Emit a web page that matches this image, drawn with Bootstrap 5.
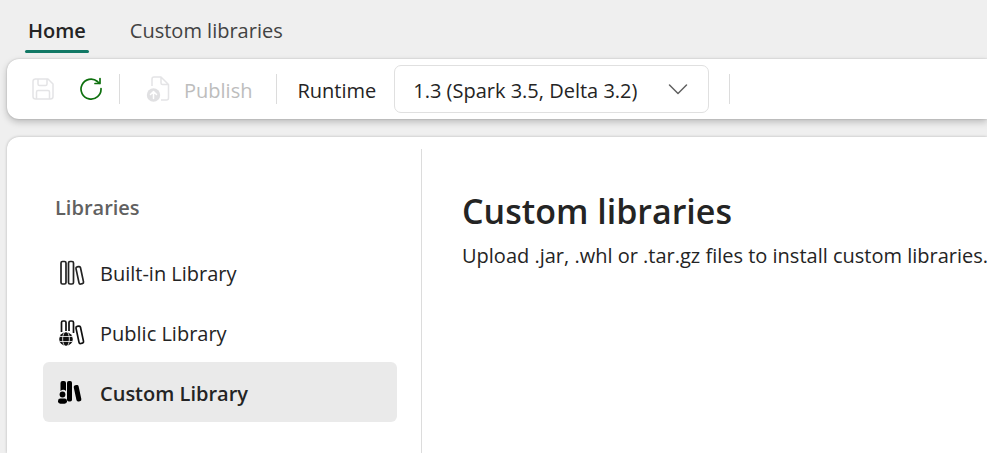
<!DOCTYPE html>
<html lang="en">
<head>
<meta charset="utf-8">
<meta name="viewport" content="width=device-width, initial-scale=1">
<title>Custom libraries</title>
<link href="https://cdn.jsdelivr.net/npm/bootstrap@5.3.0/dist/css/bootstrap.min.css" rel="stylesheet">
<style>
  body { font-family: "Segoe UI", "Open Sans", "Noto Sans", sans-serif; font-size: 20px; line-height: 28px; color: #242424; background: #efefef; }
  .top-tabs { padding: 17px 0 6px 25px; gap: 38px; }
  .top-tabs .nav-link { padding: 0 3px 5px; line-height: 28px; color: #424242; border-bottom: 3px solid transparent; }
  .top-tabs .nav-link.active { color: #242424; font-weight: 600; position: relative; }
  .top-tabs .nav-link.active::after { content: ""; position: absolute; left: 0; right: 0; bottom: -3px; height: 3px; border-radius: 2px; background: #117865; }
  .surface { background: #fff; margin-left: 7px; box-shadow: 0 0 2px rgba(0,0,0,.2), 0 3px 7px rgba(0,0,0,.22); }
  .toolbar { height: 60px; border-radius: 12px 0 0 12px; padding-left: 24px; }
  .workspace { border-radius: 12px 0 0 0; margin-top: 18px; box-shadow: 0 0 3px rgba(0,0,0,.25); padding-top: 12px; }
  .tool { background: none; border: 0; padding: 0; line-height: 28px; }
  .tool:disabled { color: #bdbdbd; }
  .rule { width: 1px; height: 30px; background: #dcdcdc; }
  .tool svg, .lib-link svg { display: block; flex: none; }
  .tool-text { padding-top: 3px; }
  .publish { padding-left: 10px; gap: 14px; }
  .runtime { width: 315px; height: 48px; margin: 0 20px 0 18px; padding: 3px 48px 0 18px; border-color: #e0e0e0; border-radius: 7px; font-size: 20px; color: #242424; background-size: 20px 20px; background-position: right 20px center;
    background-image: url("data:image/svg+xml,%3Csvg xmlns='http://www.w3.org/2000/svg' viewBox='0 0 20 20'%3E%3Cpath d='M1.5 6 10 14.5 18.500 6' fill='none' stroke='%23616161' stroke-width='1.500' stroke-linecap='round' stroke-linejoin='round'/%3E%3C/svg%3E"); }
  .side { width: 415px; padding: 0 24px 0 36px; border-right: 1px solid #dcdcdc; }
  .side h2 { margin: 45px 0 20px 12px; font-size: 20px; line-height: 28px; font-weight: 600; color: #616161; }
  .lib-link { height: 60px; padding: 3px 14px 0; gap: 14px; border-radius: 6px; color: #242424; }
  .lib-link.active { background: #eaeaea; font-weight: 600; }
  .detail { padding: 39px 0 24px 40px; }
  .detail h1 { font-size: 34px; line-height: 46px; font-weight: 600; margin: 0 0 8px; }
</style>
<script src="https://cdn.jsdelivr.net/npm/bootstrap@5.3.0/dist/js/bootstrap.bundle.min.js"></script>
</head>
<body class="d-flex flex-column min-vh-100 overflow-x-hidden">
<nav class="nav top-tabs" aria-label="Sections">
  <a class="nav-link active" href="#home" aria-current="page">Home</a>
  <a class="nav-link" href="#custom">Custom libraries</a>
</nav>

<div class="surface toolbar d-flex align-items-center" role="toolbar" aria-label="Environment">
  <button class="tool" type="button" disabled aria-label="Save">
    <svg width="24" height="24" viewBox="0 0 24 24" fill="none" stroke="#e4e4e6" stroke-width="1.500" stroke-linejoin="round"><path d="M4 2h13l5 5v12.500a2.500 2.500 0 0 1-2.500 2.500h-15A2.500 2.500 0 0 1 2 19.500v-15A2.500 2.500 0 0 1 4.500 2M7 2v5a1.500 1.500 0 0 0 1.500 1.500h6A1.500 1.500 0 0 0 16 7V2M5.500 22v-7A1.500 1.500 0 0 1 7 13.500h10a1.500 1.500 0 0 1 1.500 1.500v7"/></svg>
  </button>
  <button class="tool ms-4" type="button" aria-label="Refresh">
    <svg width="24" height="24" viewBox="0 0 24 24" fill="none" stroke="#0e700e" stroke-width="1.700" stroke-linecap="round" stroke-linejoin="round"><path d="M22 11.500A10 10 0 1 1 18.500 4.500L20.500 6.500M21 1.500v5h-5"/></svg>
  </button>
  <span class="rule ms-3 me-3"></span>
  <button class="tool publish d-flex align-items-center" type="button" disabled>
    <svg width="24" height="26" viewBox="0 0 24 26"><path d="M6 10V3a2 2 0 0 1 2-2h7l7.500 7.500V22a2 2 0 0 1-2 2H15M15 1v6a1.500 1.500 0 0 0 1.500 1.500h6" fill="none" stroke="#e4e4e6" stroke-width="1.500" stroke-linejoin="round"/><circle cx="7.500" cy="19" r="6.700" fill="#e0e0e2"/><path d="M7.500 22.500v-7M4.500 18.500l3-3 3 3" fill="none" stroke="#fff" stroke-width="1.500" stroke-linecap="round" stroke-linejoin="round"/></svg>
    <span class="tool-text">Publish</span>
  </button>
  <span class="rule ms-4"></span>
  <label class="ms-3 ps-1 tool-text" for="runtime">Runtime</label>
  <select class="form-select runtime" id="runtime"><option>1.3 (Spark 3.5, Delta 3.2)</option></select>
  <span class="rule"></span>
</div>

<main class="surface workspace d-flex flex-grow-1">
  <aside class="side flex-shrink-0">
    <h2>Libraries</h2>
    <nav class="nav flex-column" aria-label="Libraries">
      <a class="nav-link lib-link d-flex align-items-center" href="#builtin">
        <svg width="29" height="30" viewBox="0 0 29 30" fill="none" stroke="#242424" stroke-width="1.700"><rect x="4" y="2.500" width="5" height="22.500" rx="1.500"/><rect x="11.500" y="2.500" width="5" height="22.500" rx="1.500"/><rect x="20.500" y="7.500" width="4.600" height="17.500" rx="1.500" transform="rotate(-12 23 16.500)"/></svg>
        Built-in Library
      </a>
      <a class="nav-link lib-link d-flex align-items-center" href="#public">
        <svg width="29" height="30" viewBox="0 0 29 30" fill="none" stroke="#111" stroke-width="1.700"><path d="M4.500 13V3.500A1.500 1.500 0 0 1 6 2h1.500A1.500 1.500 0 0 1 9 3.500V12M12 12V3.500A1.500 1.500 0 0 1 13.500 2H15a1.500 1.500 0 0 1 1.500 1.500V14"/><rect x="20.500" y="7" width="4.600" height="17.500" rx="1.500" transform="rotate(-12 23 16)"/><circle cx="9" cy="20" r="6.800" fill="#111" stroke="none"/><path d="M2.500 17.500h13M2.500 22.500h13M7.500 13c-2.500 4-2.500 10 0 14M10.500 13c2.500 4 2.500 10 0 14" stroke="#fff" stroke-width=".8"/></svg>
        Public Library
      </a>
      <a class="nav-link lib-link d-flex align-items-center active" href="#customlib" aria-current="true">
        <svg width="29" height="30" viewBox="0 0 29 30" fill="#000"><path d="M3.500 12V4A2 2 0 0 1 5.500 2h1.500A2 2 0 0 1 9 4v8a4 4 0 0 0-5.500 0z"/><rect x="10" y="2" width="5" height="20.500" rx="1.800"/><rect x="18" y="6" width="5" height="16.500" rx="1.800" transform="rotate(-12 20.500 14)"/><circle cx="5.500" cy="15.500" r="2.900"/><rect x="1" y="19.500" width="9" height="5.200" rx="2.400"/></svg>
        Custom Library
      </a>
    </nav>
  </aside>
  <section class="detail flex-grow-1">
    <h1>Custom libraries</h1>
    <p class="mb-0 text-nowrap">Upload .jar, .whl or .tar.gz files to install custom libraries.</p>
  </section>
</main>
</body>
</html>
